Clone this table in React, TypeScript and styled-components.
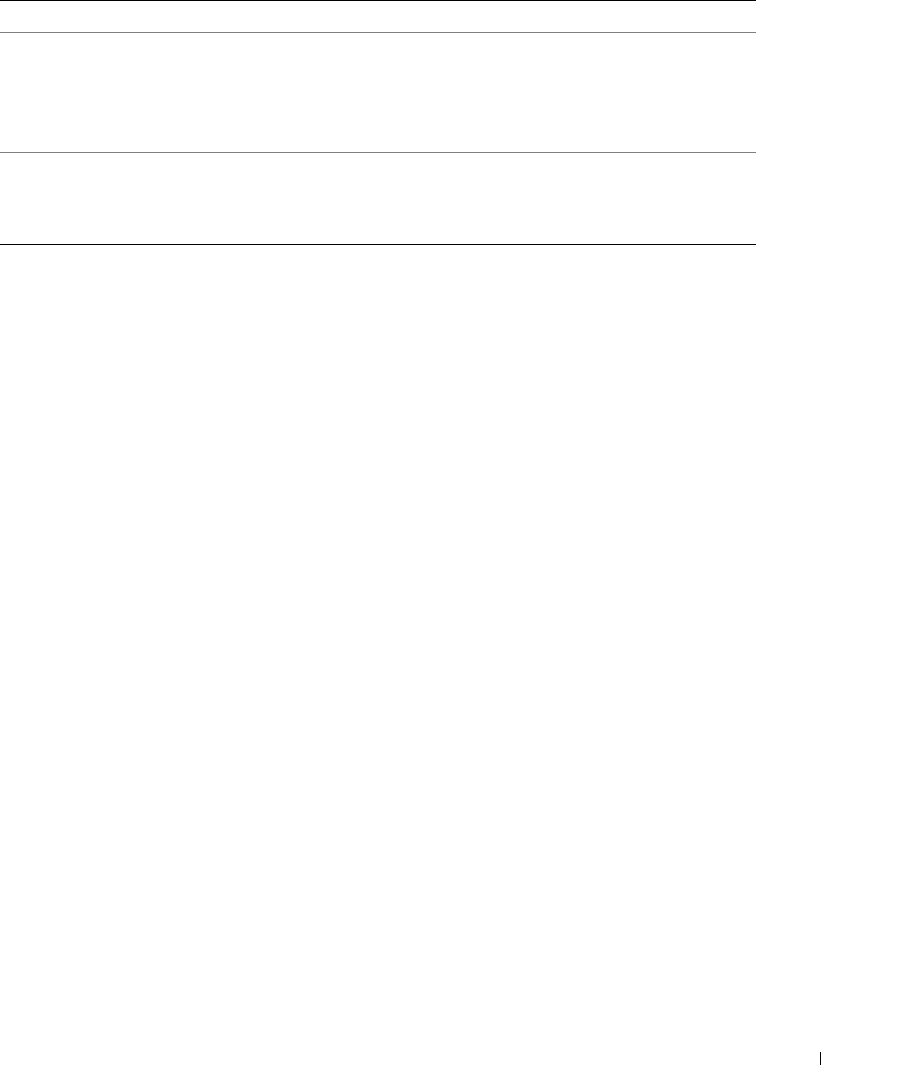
import React from "react"
import styled, { createGlobalStyle } from "styled-components"

const GlobalStyle = createGlobalStyle`
  html, body {
    margin: 0;
    padding: 0;
    background: #ffffff;
    font-family: "Liberation Sans", Arial, sans-serif;
  }
`

const Page = styled.div`
  width: 900px;
  height: 1065px;
  display: flex;
  flex-direction: column;
  overflow: hidden;
`

const Table = styled.div`
  width: 756px;
  display: flex;
  flex-direction: column;
  border-top: 1px solid #000000;
  border-bottom: 1px solid #000000;
`

const Row = styled.div<{ h: number, last?: boolean }>`
  height: ${p => p.h}px;
  border-bottom: ${p => (p.last ? "none" : "1px solid #7f7f7f")};
`

const Footer = styled.div`
  margin-top: auto;
  height: 13px;
  display: flex;
  justify-content: flex-start;
  padding-left: 820px;
`

const Separator = styled.span`
  width: 1px;
  height: 13px;
  background: #000000;
`

const rows = [31, 119, 91]

export default function App() {
  return (
    <>
      <GlobalStyle/>
      <Page>
        <Table>
          {rows.map((h, i) => (
            <Row key={i} h={h} last={i === rows.length - 1}/>
          ))}
        </Table>
        <Footer>
          <Separator/>
        </Footer>
      </Page>
    </>
  )
}
